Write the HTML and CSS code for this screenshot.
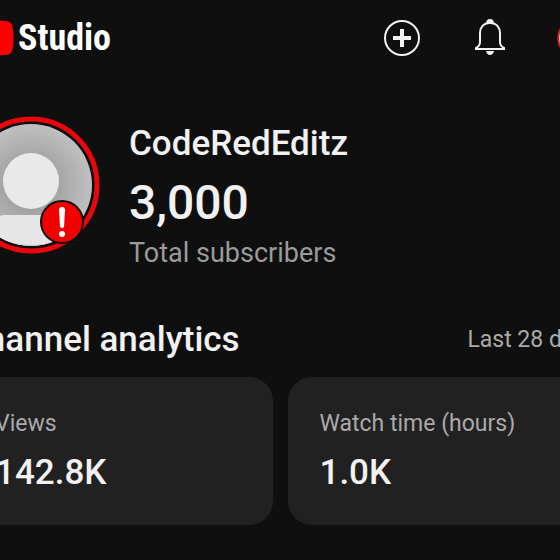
FILE: index.html
```html
<!DOCTYPE html>
<html lang="en">
<head>
    <meta charset="UTF-8">
    <meta name="viewport" content="width=device-width, initial-scale=1.0">
    <title>Studio</title>
    <link rel="stylesheet" href="styles.css">
</head>
<body>
    <div class="app">
        <header class="topbar">
            <a class="logo" href="#">
                <svg class="logo-mark" viewBox="0 0 50 36" aria-hidden="true">
                    <path fill="#ff0000" d="M8 1Q25-1 42 1Q48 1 49 7Q51 18 49 29Q48 35 42 35Q25 37 8 35Q2 35 1 29Q-1 18 1 7Q2 1 8 1Z"/>
                    <path fill="#ffffff" d="M20 11L33 18L20 25Z"/>
                </svg>
                <span>Studio</span>
            </a>
            <div class="actions">
                <button type="button" aria-label="Create">
                    <svg viewBox="0 0 40 40">
                        <circle cx="21" cy="20" r="17" fill="none" stroke="#f1f1f1" stroke-width="2"/>
                        <path d="M21 11V29M12 20H30" stroke="#f1f1f1" stroke-width="4"/>
                    </svg>
                </button>
                <button type="button" aria-label="Notifications">
                    <svg viewBox="0 0 40 40">
                        <path d="M17 6Q17 1 21 1Q25 1 25 6Z" fill="#f1f1f1"/>
                        <path d="M21 5C14 5 11 10 11 15V24Q11 28 7 30V31H35V30Q31 28 31 24V15C31 10 28 5 21 5Z" fill="none" stroke="#f1f1f1" stroke-width="2"/>
                        <path d="M17 33H25Q24 37 21 37Q18 37 17 33Z" fill="#f1f1f1"/>
                    </svg>
                </button>
                <button type="button" class="account" aria-label="Account"></button>
            </div>
        </header>

        <section class="channel">
            <svg class="avatar" viewBox="0 0 138 138" role="img" aria-label="Channel picture">
                <defs>
                    <radialGradient id="shade" cx="50%" cy="50%" r="52%">
                        <stop offset="40%" stop-color="#a3a3a3"/>
                        <stop offset="100%" stop-color="#c2c2c2"/>
                    </radialGradient>
                    <clipPath id="face"><circle cx="68" cy="69" r="61"/></clipPath>
                </defs>
                <circle cx="68" cy="69" r="66" fill="#0f0f0f" stroke="#e8070c" stroke-width="5"/>
                <circle cx="68" cy="69" r="61" fill="url(#shade)"/>
                <g clip-path="url(#face)">
                    <rect x="28" y="99" width="82" height="60" rx="14" fill="#e6e6e6"/>
                    <path d="M28 119Q68 139 110 119V138H28Z" fill="#c0c0c0"/>
                </g>
                <circle cx="68" cy="65" r="28" fill="#e9e9e9"/>
                <circle cx="99" cy="106" r="21" fill="#f20000" stroke="#0f0f0f" stroke-width="2"/>
                <path d="M96 94Q96 91 99 91Q102 91 102 94L101 111Q99 113 97 111Z" fill="#ffffff"/>
                <circle cx="99" cy="118" r="3" fill="#ffffff"/>
            </svg>
            <div class="channel-info">
                <h1>CodeRedEditz</h1>
                <p class="count">3,000</p>
                <p class="caption">Total subscribers</p>
            </div>
        </section>

        <section>
            <div class="section-head">
                <h2>Channel analytics</h2>
                <span class="period">Last 28 days</span>
            </div>
            <div class="cards">
                <div class="card">
                    <h3>Views</h3>
                    <p>142.8K</p>
                </div>
                <div class="card">
                    <h3>Watch time (hours)</h3>
                    <p>1.0K</p>
                </div>
            </div>
        </section>
    </div>
</body>
</html>
```

FILE: styles.css
```css
* {
    box-sizing: border-box;
}

body {
    margin: 0;
    background-color: #0f0f0f;
    color: #f1f1f1;
    font-family: Roboto, "Noto Sans", sans-serif;
    overflow: hidden;
}

h1, h2, h3, p {
    margin: 0;
    font-weight: 500;
}

/* content bleeds past both edges of the window */
.app {
    margin: 0 -37px;
}

.topbar {
    display: flex;
    justify-content: space-between;
    align-items: center;
    height: 76px;
}

.logo {
    display: flex;
    align-items: center;
    gap: 4px;
    color: #ffffff;
    font-family: "Roboto Condensed", "Liberation Sans Narrow", sans-serif;
    font-size: 36px;
    font-weight: 700;
    text-decoration: none;
}

.logo-mark {
    width: 51px;
    height: 36px;
}

.actions {
    display: flex;
    gap: 48px;
}

.actions button {
    width: 40px;
    height: 40px;
    padding: 0;
    border: none;
    background: none;
    cursor: pointer;
}

.actions svg {
    display: block;
}

.actions .account {
    border: 2px solid #c4161c;
    border-radius: 50%;
    background-color: #c9c0b8;
}

.channel {
    display: flex;
    gap: 28px;
    padding-top: 40px;
}

.avatar {
    flex: none;
    width: 138px;
    height: 138px;
}

.channel-info {
    white-space: nowrap;
}

h1 {
    font-size: 35px;
    line-height: 56px;
}

.count {
    font-size: 48px;
    line-height: 62px;
}

.caption {
    color: #9b9b9b;
    font-size: 27px;
    font-weight: 400;
    line-height: 38px;
}

.section-head {
    display: flex;
    justify-content: space-between;
    align-items: center;
    height: 105px;
    padding-top: 30px;
    white-space: nowrap;
}

h2 {
    font-size: 35px;
}

.period {
    color: #aaaaaa;
    font-size: 23px;
}

.cards {
    display: grid;
    grid-template-columns: 1fr 1fr;
    gap: 15px;
}

.card {
    padding: 29px 32px 22px;
    border-radius: 24px;
    background-color: #212121;
}

.card h3 {
    color: #aaaaaa;
    font-size: 23px;
    font-weight: 400;
    line-height: 36px;
}

.card p {
    font-size: 35px;
    line-height: 61px;
}
```
